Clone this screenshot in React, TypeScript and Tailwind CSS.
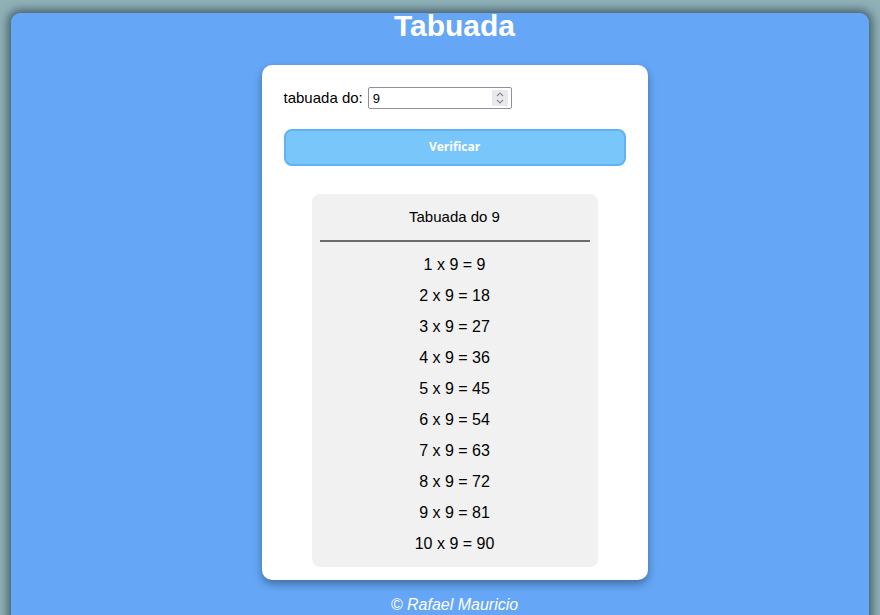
import { useState } from 'react';

export default function App() {
  const [numero, setNumero] = useState('9');
  const n = Number(numero) || 0;
  const linhas = Array.from({ length: 10 }, (_, i) => i + 1);

  return (
    <div className="min-h-[615px] h-[615px] overflow-hidden bg-[#8fb1b8] pt-[13px] px-[11px] font-['Liberation_Sans',Arial,sans-serif]">
      <div className="h-[640px] rounded-[9px] bg-[#65a6f6] shadow-[0_0_10px_3px_rgba(40,60,70,0.75)] pl-[29px] flex flex-col items-center">
        {/* Titulo */}
        <h1 className="text-[30px] leading-[30px] font-bold text-white -mt-[2px] h-[54px]">Tabuada</h1>

        {/* Card */}
        <div className="w-[386px] h-[515px] bg-white rounded-[10px] shadow-[0_4px_8px_rgba(0,0,0,0.35)] px-[22px] pt-[22px] flex flex-col">
          <div className="flex items-center gap-[5px] text-[15px] text-black">
            <span>tabuada do:</span>
            <div className="relative w-[144px] h-[22px] border border-[#8f8f9d] rounded-[2px] flex items-center">
              <input
                type="text"
                value={numero}
                onChange={e => setNumero(e.target.value)}
                className="w-full h-full pl-[4px] text-[13px] outline-none font-['Liberation_Sans',Arial,sans-serif]"
              />
              <div className="absolute right-[3px] top-[2px] w-[16px] h-[16px] bg-[#e9e9ed] flex flex-col items-center justify-center">
                <svg width="10" height="14" viewBox="0 0 10 14" fill="none" stroke="#8a8a8a" strokeWidth="1.2">
                  <path d="M2 5 L5 2 L8 5" />
                  <path d="M2 9 L5 12 L8 9" />
                </svg>
              </div>
            </div>
          </div>

          <button className="mt-[19px] w-[342px] h-[37px] rounded-[8px] bg-[#79c7fa] border-2 border-[#5fb2f5] text-white text-[12px] font-bold font-['Open_Sans','DejaVu_Sans',sans-serif]">
            Verificar
          </button>

          {/* Resultado */}
          <div className="mt-[28px] mx-auto w-[286px] h-[373px] bg-[#f1f1f1] rounded-[8px] px-[8px] pt-[12px]">
            <p className="text-center text-[15px] leading-[22px] text-black">Tabuada do {n}</p>
            <hr className="mt-[12px] border-0 h-[2px] bg-[#6b6b6b]" />
            <div className="h-[307px] overflow-hidden pt-[13px]">
              {linhas.map(i => (
                <p key={i} className="text-center text-[16px] leading-[19px] h-[31px] text-black">
                  {i} x {n} = {i * n}
                </p>
              ))}
            </div>
          </div>
        </div>

        <p className="mt-[13px] text-[16px] italic text-white">© Rafael Mauricio</p>
      </div>
    </div>
  );
}
